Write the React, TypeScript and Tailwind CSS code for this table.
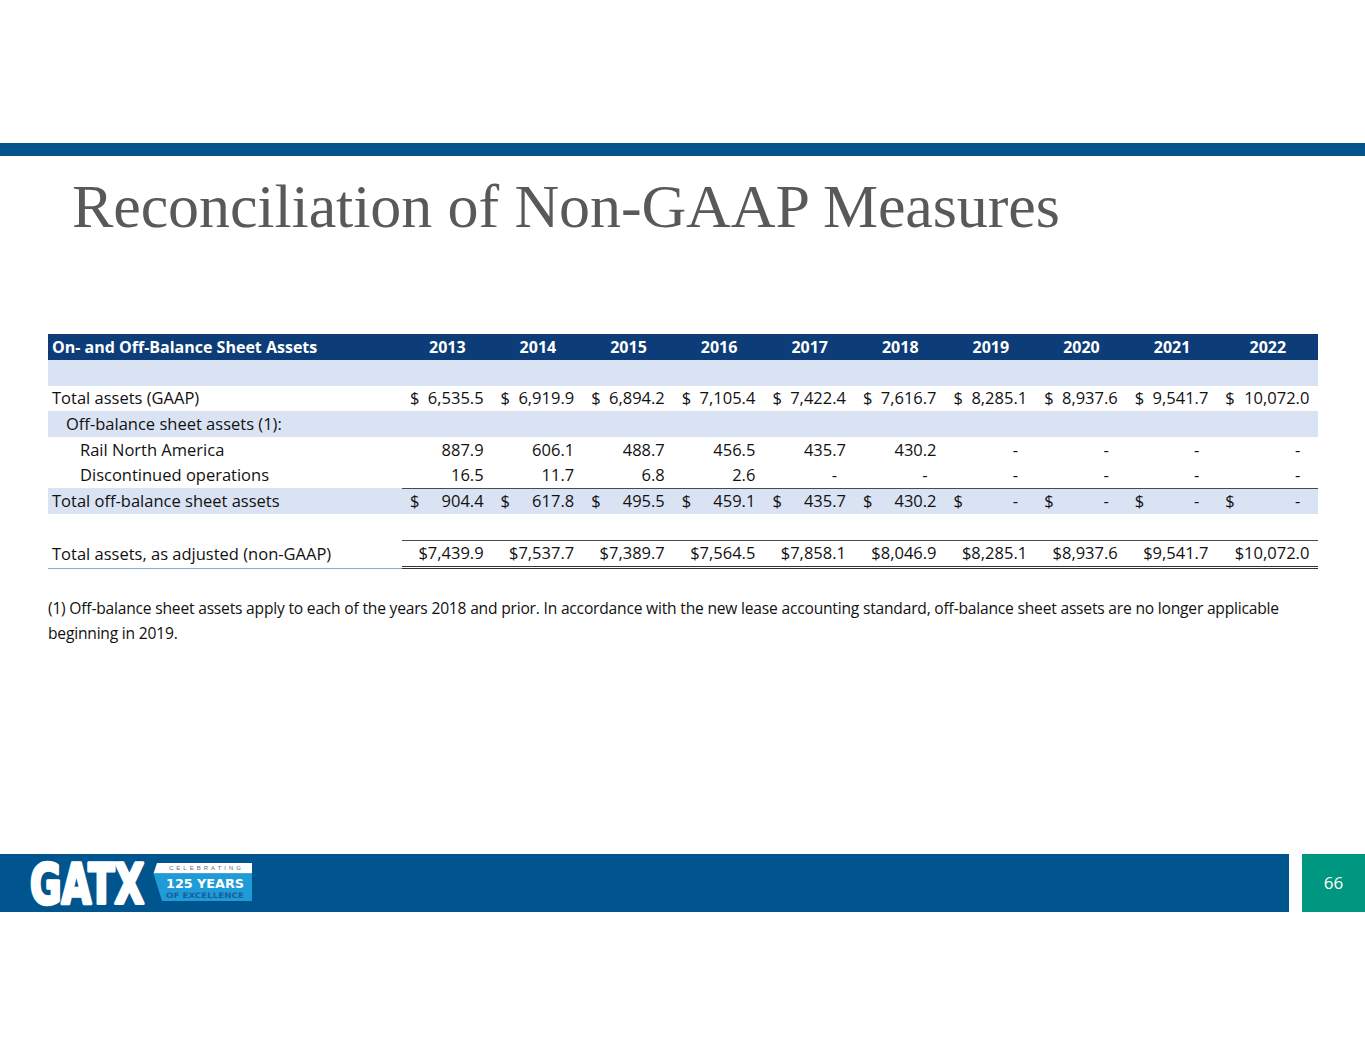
import React from 'react';

const years = ['2013', '2014', '2015', '2016', '2017', '2018', '2019', '2020', '2021', '2022'];

const gaap = ['6,535.5', '6,919.9', '6,894.2', '7,105.4', '7,422.4', '7,616.7', '8,285.1', '8,937.6', '9,541.7', '10,072.0'];
const rail = ['887.9', '606.1', '488.7', '456.5', '435.7', '430.2', '-', '-', '-', '-'];
const disc = ['16.5', '11.7', '6.8', '2.6', '-', '-', '-', '-', '-', '-'];
const offTotal = ['904.4', '617.8', '495.5', '459.1', '435.7', '430.2', '-', '-', '-', '-'];
const adjusted = ['$7,439.9', '$7,537.7', '$7,389.7', '$7,564.5', '$7,858.1', '$8,046.9', '$8,285.1', '$8,937.6', '$9,541.7', '$10,072.0'];

const grid = 'grid w-[1270px] grid-cols-[354px_repeat(9,90.6px)_101px]';

function Value({ v, dollar }: { v: string; dollar?: boolean }) {
  return (
    <div className="flex items-center justify-between h-full pl-[8px] pr-[9px]">
      <span>{dollar ? '$' : ''}</span>
      {v === '-' ? <span className="mr-[9px]">-</span> : <span>{v}</span>}
    </div>
  );
}

function Row({
  label,
  values,
  dollar,
  indent = 0,
  shade,
  topLine,
  h = 'h-[26px]',
}: {
  label?: string;
  values?: string[];
  dollar?: boolean;
  indent?: number;
  shade?: boolean;
  topLine?: boolean;
  h?: string;
}) {
  const pad = indent === 0 ? 'pl-[4px]' : indent === 1 ? 'pl-[18px]' : 'pl-[32px]';
  return (
    <div className={`${grid} ${h} ${shade ? 'bg-[#dae3f3]' : 'bg-white'}`}>
      <div className={`flex items-center ${pad}`}>{label}</div>
      {years.map((y, i) => (
        <div key={y} className={topLine ? 'border-t-[1.5px] border-[#4a4a4a]' : ''}>
          {values ? <Value v={values[i]} dollar={dollar} /> : null}
        </div>
      ))}
    </div>
  );
}

function Logo() {
  return (
    <svg width="230" height="44" viewBox="0 0 230 44" className="block overflow-visible">
      <text
        x="2"
        y="41.5"
        fill="#ffffff"
        stroke="#ffffff"
        strokeWidth="3.5"
        strokeLinejoin="round"
        fontFamily="'DejaVu Sans', 'Liberation Sans', sans-serif"
        fontWeight="700"
        fontSize="55"
        textLength="114"
        lengthAdjust="spacingAndGlyphs"
      >
        GATX
      </text>
      <polygon points="129,2 224,2 224,12.5 125.5,12.5" fill="#ffffff" />
      <polygon points="125.5,12.5 224,12.5 224,40 134,40" fill="#1f9bd7" />
      <text
        x="177"
        y="9.3"
        textAnchor="middle"
        fill="#6d6d6d"
        fontFamily="'Liberation Sans', Arial, sans-serif"
        fontSize="6"
        textLength="72"
        lengthAdjust="spacing"
      >
        CELEBRATING
      </text>
      <text
        x="177"
        y="26.5"
        textAnchor="middle"
        fill="#ffffff"
        fontFamily="'DejaVu Sans', sans-serif"
        fontWeight="700"
        fontSize="12.5"
        textLength="78"
        lengthAdjust="spacingAndGlyphs"
      >
        125 YEARS
      </text>
      <text
        x="177"
        y="37"
        textAnchor="middle"
        fill="#1b5e9e"
        fontFamily="'DejaVu Sans', sans-serif"
        fontWeight="700"
        fontSize="7.5"
        textLength="78"
        lengthAdjust="spacingAndGlyphs"
      >
        OF EXCELLENCE
      </text>
    </svg>
  );
}

export default function App() {
  return (
    <div className="w-[1365px] h-[1055px] bg-white flex flex-col font-['Open_Sans','Liberation_Sans',sans-serif]">
      <div className="h-[143px]" />
      <div className="h-[13px] bg-[#00558f]" />

      <div className="h-[178px] pl-[72px] pt-[19px]">
        <h1 className="font-['Liberation_Serif',serif] text-[62px] leading-none text-[#595959] whitespace-nowrap tracking-[-0.1px]">
          Reconciliation of Non-GAAP Measures
        </h1>
      </div>

      <div className="pl-[48px] text-[16.5px] text-[#111]">
        <div className={`${grid} h-[26px] bg-[#0d3d78] text-white font-bold text-[16px]`}>
          <div className="flex items-center pl-[4px]">On- and Off-Balance Sheet Assets</div>
          {years.map((y) => (
            <div key={y} className="flex items-center justify-center">
              {y}
            </div>
          ))}
        </div>
        <Row shade />
        <Row label="Total assets (GAAP)" values={gaap} dollar h="h-[25px]" />
        <Row label="Off-balance sheet assets (1):" indent={1} shade />
        <Row label="Rail North America" values={rail} indent={2} />
        <Row label="Discontinued operations" values={disc} indent={2} h="h-[25px]" />
        <Row label="Total off-balance sheet assets" values={offTotal} dollar shade topLine />
        <Row />
        <div className={`${grid} h-[29px]`}>
          <div className="flex items-center pl-[4px] border-b border-[#8eaadb]">
            Total assets, as adjusted (non-GAAP)
          </div>
          {adjusted.map((v, i) => (
            <div
              key={i}
              className="flex items-center justify-end pr-[9px] border-t-[1.5px] border-t-[#4a4a4a] border-b-[3px] border-b-[#333] border-double"
            >
              {v}
            </div>
          ))}
        </div>
      </div>

      <div className="pl-[48px] pt-[27px] text-[15.6px] leading-[25px] text-[#111] tracking-[-0.2px] whitespace-nowrap">
        (1) Off-balance sheet assets apply to each of the years 2018 and prior. In accordance with the new lease
        accounting standard, off-balance sheet assets are no longer applicable
        <br />
        beginning in 2019.
      </div>

      <div className="mt-auto mb-[143px] flex h-[58px] gap-[13px]">
        <div className="flex-1 bg-[#00558f] pl-[28px] pt-[7px]">
          <Logo />
        </div>
        <div className="w-[63px] bg-[#009780] flex items-center justify-center text-white text-[17px]">
          66
        </div>
      </div>
    </div>
  );
}
